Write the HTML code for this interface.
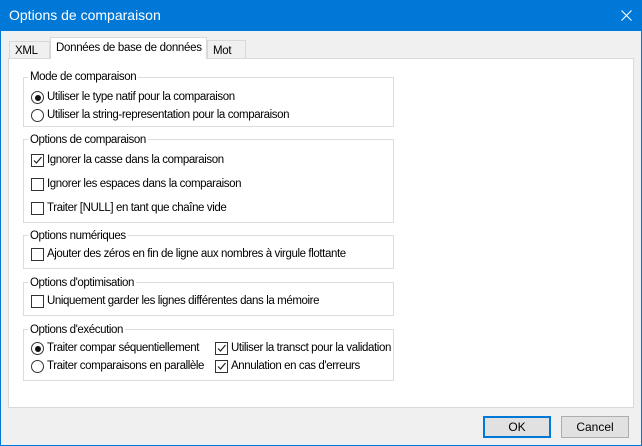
<!DOCTYPE html>
<html><head><meta charset="utf-8"><style>
*{margin:0;padding:0;box-sizing:border-box}
body{width:642px;height:446px;overflow:hidden;background:#f0f0f0;font-family:"Liberation Sans",sans-serif;font-size:11.5px;color:#000;position:relative;letter-spacing:-0.4px}
.a{position:absolute;white-space:nowrap}
#frame{left:0;top:0;width:642px;height:446px;border:1px solid #0078d7}
#title{left:0;top:0;width:642px;height:31px;background:#0078d7;color:#fff;font-size:14px;letter-spacing:0}
.panel{left:8px;top:58px;width:626px;height:350px;background:#fff;border:1px solid #d9d9d9}
.tab{background:#f0f0f0;border:1px solid #d9d9d9;border-bottom:none;font-size:11.5px;padding-left:5px;letter-spacing:-0.3px}
.grp{border:1px solid #dcdcdc;left:23px;width:371px}
.lg{background:#fff;padding:0 2px;left:28px}
.cb{width:13px;height:13px;border:1px solid #333;background:#fff}
.rb{width:13px;height:13px;border:1px solid #333;border-radius:50%;background:#fff}
.rb.on::after{content:"";position:absolute;left:2.5px;top:2.5px;width:6px;height:6px;border-radius:50%;background:#111}
.btn{height:22px;background:#e1e1e1;border:1px solid #adadad;text-align:center;line-height:20px;font-size:12px;letter-spacing:0}
</style></head><body>
<div class="a" id="title"><span class="a" style="left:9px;top:7px">Options de comparaison</span>
<svg class="a" style="left:621px;top:10px" width="11" height="11"><path d="M0.5 0.5L10.5 10.5M10.5 0.5L0.5 10.5" stroke="#fff" stroke-width="1.1"/></svg></div>
<div class="a" id="frame"></div>
<div class="a panel"></div>
<div class="a tab" style="left:9px;top:41px;width:41px;height:17px;line-height:18px">XML</div>
<div class="a tab" style="left:207px;top:40px;width:39px;height:18px;line-height:20px">Mot</div>
<div class="a tab" style="left:50px;top:37px;width:157px;height:22px;background:#fff;line-height:21px">Données de base de données</div>

<div class="a grp" style="top:77px;height:50px"></div><span class="a lg" style="top:71px">Mode de comparaison</span>
<div class="a grp" style="top:139px;height:84px"></div><span class="a lg" style="top:134px">Options de comparaison</span>
<div class="a grp" style="top:235px;height:34px"></div><span class="a lg" style="top:230px">Options numériques</span>
<div class="a grp" style="top:282px;height:34px"></div><span class="a lg" style="top:277px">Options d'optimisation</span>
<div class="a grp" style="top:329px;height:52px"></div><span class="a lg" style="top:324px">Options d'exécution</span>

<div class="a rb on" style="left:31px;top:91px"></div><span class="a" style="left:47px;top:91px">Utiliser le type natif pour la comparaison</span>
<div class="a rb" style="left:31px;top:109px"></div><span class="a" style="left:47px;top:109px">Utiliser la string-representation pour la comparaison</span>

<div class="a cb" style="left:31px;top:154px"><svg width="11" height="11" class="a"><path d="M2 5.5L4.5 8L9.5 2" stroke="#222" stroke-width="1.2" fill="none"/></svg></div><span class="a" style="left:47px;top:154px">Ignorer la casse dans la comparaison</span>
<div class="a cb" style="left:31px;top:178px"></div><span class="a" style="left:47px;top:178px">Ignorer les espaces dans la comparaison</span>
<div class="a cb" style="left:31px;top:202px"></div><span class="a" style="left:47px;top:202px">Traiter [NULL] en tant que chaîne vide</span>
<div class="a cb" style="left:31px;top:248px"></div><span class="a" style="left:47px;top:248px">Ajouter des zéros en fin de ligne aux nombres à virgule flottante</span>
<div class="a cb" style="left:31px;top:295px"></div><span class="a" style="left:47px;top:295px">Uniquement garder les lignes différentes dans la mémoire</span>

<div class="a rb on" style="left:31px;top:342px"></div><span class="a" style="left:47px;top:342px">Traiter compar séquentiellement</span>
<div class="a rb" style="left:31px;top:360px"></div><span class="a" style="left:47px;top:360px">Traiter comparaisons en parallèle</span>
<div class="a cb" style="left:215px;top:342px"><svg width="11" height="11" class="a"><path d="M2 5.5L4.5 8L9.5 2" stroke="#222" stroke-width="1.2" fill="none"/></svg></div><span class="a" style="left:231px;top:342px">Utiliser la transct pour la validation</span>
<div class="a cb" style="left:215px;top:360px"><svg width="11" height="11" class="a"><path d="M2 5.5L4.5 8L9.5 2" stroke="#222" stroke-width="1.2" fill="none"/></svg></div><span class="a" style="left:231px;top:360px">Annulation en cas d'erreurs</span>

<div class="a btn" style="left:483px;top:416px;width:68px;border:2px solid #0078d7;line-height:18px">OK</div>
<div class="a btn" style="left:561px;top:416px;width:68px">Cancel</div>
</body></html>
